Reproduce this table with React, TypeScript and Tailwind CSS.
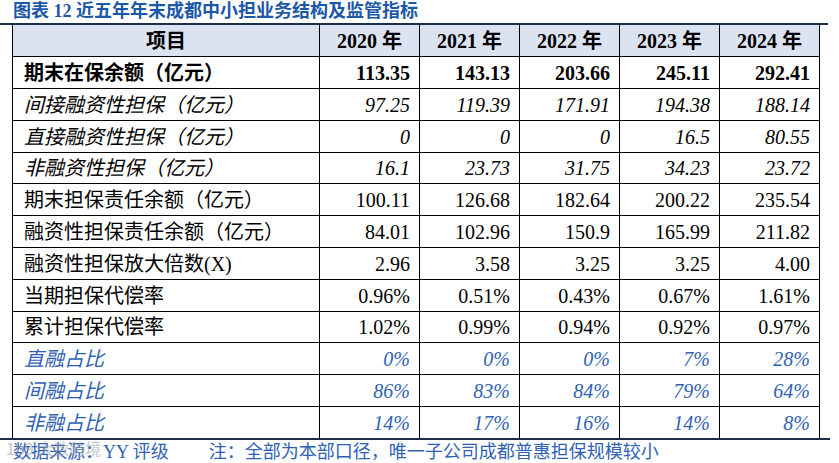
import React from "react";

type Row = {
  label: string;
  values: string[];
  kind: "bold" | "italic" | "normal" | "blue";
  h: string;
};

const rows: Row[] = [
  { label: "期末在保余额（亿元）", values: ["113.35", "143.13", "203.66", "245.11", "292.41"], kind: "bold", h: "h-[32px]" },
  { label: "间接融资性担保（亿元）", values: ["97.25", "119.39", "171.91", "194.38", "188.14"], kind: "italic", h: "h-[32px]" },
  { label: "直接融资性担保（亿元）", values: ["0", "0", "0", "16.5", "80.55"], kind: "italic", h: "h-[32px]" },
  { label: "非融资性担保（亿元）", values: ["16.1", "23.73", "31.75", "34.23", "23.72"], kind: "italic", h: "h-[31px]" },
  { label: "期末担保责任余额（亿元）", values: ["100.11", "126.68", "182.64", "200.22", "235.54"], kind: "normal", h: "h-[32px]" },
  { label: "融资性担保责任余额（亿元）", values: ["84.01", "102.96", "150.9", "165.99", "211.82"], kind: "normal", h: "h-[32px]" },
  { label: "融资性担保放大倍数(X)", values: ["2.96", "3.58", "3.25", "3.25", "4.00"], kind: "normal", h: "h-[32px]" },
  { label: "当期担保代偿率", values: ["0.96%", "0.51%", "0.43%", "0.67%", "1.61%"], kind: "normal", h: "h-[32px]" },
  { label: "累计担保代偿率", values: ["1.02%", "0.99%", "0.94%", "0.92%", "0.97%"], kind: "normal", h: "h-[31px]" },
  { label: "直融占比", values: ["0%", "0%", "0%", "7%", "28%"], kind: "blue", h: "h-[32px]" },
  { label: "间融占比", values: ["86%", "83%", "84%", "79%", "64%"], kind: "blue", h: "h-[32px]" },
  { label: "非融占比", values: ["14%", "17%", "16%", "14%", "8%"], kind: "blue", h: "h-[31px]" },
];

const years = ["2020 年", "2021 年", "2022 年", "2023 年", "2024 年"];

function styleFor(kind: Row["kind"]) {
  if (kind === "bold") return "font-bold text-black";
  if (kind === "italic") return "italic text-black";
  if (kind === "blue") return "italic text-[#2f62b5]";
  return "text-black";
}

export default function App() {
  return (
    <div className="relative w-[839px] h-[463px] overflow-hidden bg-white font-['Liberation_Serif','Noto_Sans_CJK_SC',serif]">
      <div className="h-[23px] pl-[13px] text-[18px] leading-[23px] font-bold text-[#1c58a8] whitespace-nowrap">
        图表 12 近五年年末成都中小担业务结构及监管指标
      </div>
      <div className="w-[828px] h-[2px] bg-[#1b2f4b]" />
      <div className="ml-[12px] w-[808px] border-l border-r border-black">
        <div className="flex h-[32px] border-b border-black bg-[#dbe2f0]">
          <div className="w-[307px] border-r border-black flex items-center justify-center text-[20px] font-bold">
            项目
          </div>
          {years.map((y, i) => (
            <div
              key={y}
              className={`${i < 4 ? "w-[100px] border-r border-black" : "w-[99px]"} flex items-center justify-center text-[20px] font-bold whitespace-nowrap`}
            >
              {y}
            </div>
          ))}
        </div>
        {rows.map((r, ri) => (
          <div
            key={r.label}
            className={`flex ${r.h} ${ri < rows.length - 1 ? "border-b border-black" : ""} ${styleFor(r.kind)} text-[20px]`}
          >
            <div className="w-[307px] border-r border-black flex items-center pl-[11px] whitespace-nowrap">
              {r.label}
            </div>
            {r.values.map((v, i) => (
              <div
                key={i}
                className={`${i < 4 ? "w-[100px] border-r border-black" : "w-[99px]"} flex items-center justify-end pr-[9px] whitespace-nowrap`}
              >
                {v}
              </div>
            ))}
          </div>
        ))}
      </div>
      <div className="w-[830px] h-[2px] bg-[#1b2f4b]" />
      <div className="relative flex pl-[13px] pt-[1px] text-[18px] leading-[22px] text-[#2f62b5] whitespace-nowrap">
        <span>数据来源：YY 评级</span>
        <span className="ml-[40px]">注：全部为本部口径，唯一子公司成都普惠担保规模较小</span>
        <span className="absolute left-[6px] top-[0px] text-[16px] leading-[16px] text-[#9aa0a8] opacity-60 font-['Noto_Sans_CJK_SC',sans-serif]">
          1b9 大数跨境
        </span>
      </div>
    </div>
  );
}
